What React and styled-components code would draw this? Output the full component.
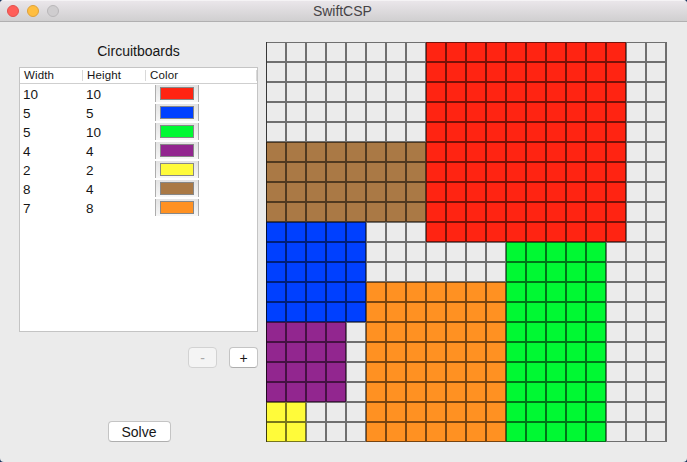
import React from "react";
import styled, { createGlobalStyle } from "styled-components";

const GlobalStyle = createGlobalStyle`
  * { box-sizing: border-box; }
  html, body { margin: 0; background: #16345f; }
  body { font-family: "Liberation Sans", Arial, sans-serif; overflow: hidden; }
`;

const Window = styled.main`
  width: 687px;
  height: 462px;
  display: flex;
  flex-direction: column;
  border-radius: 4px;
  overflow: hidden;
  background: #ebebeb;
  color: #161616;
`;

const TitleBar = styled.header`
  height: 22px;
  flex: none;
  display: grid;
  grid-template-columns: 306px auto 1fr;
  align-items: center;
  padding: 0 7px;
  background: linear-gradient(#eae6ea, #d0cfd0);
  border-top: 1px solid #f5f3f5;
  border-bottom: 1px solid #b1b0b1;
`;

const Lights = styled.div`
  display: flex;
  gap: 8px;
`;

const Light = styled.span`
  width: 12px;
  height: 12px;
  border-radius: 50%;
  background: ${(p) => p.$fill};
  border: 1px solid ${(p) => p.$edge};
`;

const Title = styled.h1`
  margin: 0;
  font-size: 14px;
  line-height: 20px;
  font-weight: 400;
  letter-spacing: -0.05px;
  white-space: nowrap;
  color: #464346;
`;

const Content = styled.div`
  flex: 1;
  display: flex;
  gap: 8px;
  padding: 20px 20px 0 19px;
`;

const Sidebar = styled.section`
  width: 239px;
  display: flex;
  flex-direction: column;
`;

const Heading = styled.h2`
  margin: 0;
  height: 25px;
  font-size: 14px;
  line-height: 18px;
  font-weight: 400;
  text-align: center;
`;

const Table = styled.div`
  height: 265px;
  background: #fff;
  border: 1px solid #c4c4c4;
`;

const HeaderRow = styled.div`
  height: 16px;
  display: flex;
  align-items: center;
  border-bottom: 1px solid #cfcfcf;
`;

const HeaderCell = styled.div`
  width: ${(p) => p.$width}px;
  height: 11px;
  padding-left: 4px;
  border-right: 1px solid #d9d9d9;
  font-size: 11.5px;
  line-height: 10px;
  letter-spacing: 0.15px;
`;

const Rows = styled.div`
  padding-top: 1px;
`;

const Row = styled.div`
  height: 19px;
  display: grid;
  grid-template-columns: 63px 72px 44px;
`;

const Value = styled.span`
  padding-left: 3px;
  font-size: 13.5px;
  line-height: 19px;
`;

const ColorWell = styled.div`
  height: 17px;
  padding: 2px 4px;
  background: linear-gradient(#e3e3e3, #f7f7f7);
  border: solid #adadad;
  border-width: 0 1px;
`;

const Swatch = styled.div`
  height: 13px;
  background: ${(p) => p.$color};
  border: 1px solid #878787;
`;

const Actions = styled.div`
  display: flex;
  justify-content: flex-end;
  gap: 12px;
  margin-top: 15px;
`;

const Button = styled.button`
  width: ${(p) => p.$width}px;
  height: 21px;
  padding: 1px 0 0;
  font: 14px/17px "Liberation Sans", Arial, sans-serif;
  color: #161616;
  background: #fff;
  border: 1px solid #c4c4c4;
  border-bottom-color: #aeaeae;
  border-radius: 4px;
  &:disabled {
    color: #a9a9a9;
    background: #f4f4f4;
    border-color: #d2d2d2;
  }
`;

const SolveArea = styled.div`
  display: flex;
  justify-content: center;
  margin-top: 53px;
  padding-left: 1px;
`;

const Board = styled.div`
  width: 401px;
  height: 400px;
  display: grid;
  grid-template-columns: repeat(20, 20px);
  grid-template-rows: repeat(20, 20px);
  border-right: 1px solid #6d6d6d;
`;

const Cell = styled.div`
  background: ${(p) => p.$color};
  box-shadow: inset 0 0 0 1px rgba(0, 0, 0, 0.53)
    ${(p) => (p.$first ? ", inset 1px 0 0 rgba(0, 0, 0, 0.5)" : "")};
`;

const boards = [
  { w: 10, h: 10, color: "#ff2412", x: 8, y: 0 },
  { w: 5, h: 5, color: "#0040ff", x: 0, y: 9 },
  { w: 5, h: 10, color: "#00f933", x: 12, y: 10 },
  { w: 4, h: 4, color: "#92268f", x: 0, y: 14 },
  { w: 2, h: 2, color: "#fffb3a", x: 0, y: 18 },
  { w: 8, h: 4, color: "#aa7945", x: 0, y: 5 },
  { w: 7, h: 8, color: "#ff9122", x: 5, y: 12 },
];

const colorAt = (col, row) => {
  const hit = boards.find(
    (b) => col >= b.x && col < b.x + b.w && row >= b.y && row < b.y + b.h
  );
  return hit ? hit.color : "#ebebeb";
};

export default function App() {
  return (
    <>
      <GlobalStyle />
      <Window>
        <TitleBar>
          <Lights>
            <Light $fill="#ff5e59" $edge="#e2504d" />
            <Light $fill="#ffbe40" $edge="#dfa13a" />
            <Light $fill="#cfcdcf" $edge="#b9b7b9" />
          </Lights>
          <Title>SwiftCSP</Title>
        </TitleBar>
        <Content>
          <Sidebar>
            <Heading>Circuitboards</Heading>
            <Table>
              <HeaderRow>
                <HeaderCell $width={63}>Width</HeaderCell>
                <HeaderCell $width={63}>Height</HeaderCell>
                <HeaderCell $width={111}>Color</HeaderCell>
              </HeaderRow>
              <Rows>
                {boards.map((b) => (
                  <Row key={b.color}>
                    <Value>{b.w}</Value>
                    <Value>{b.h}</Value>
                    <ColorWell>
                      <Swatch $color={b.color} />
                    </ColorWell>
                  </Row>
                ))}
              </Rows>
            </Table>
            <Actions>
              <Button $width={29} disabled>-</Button>
              <Button $width={29}>+</Button>
            </Actions>
            <SolveArea>
              <Button $width={63}>Solve</Button>
            </SolveArea>
          </Sidebar>
          <Board>
            {Array.from({ length: 400 }, (_, i) => (
              <Cell
                key={i}
                $color={colorAt(i % 20, Math.floor(i / 20))}
                $first={i % 20 === 0}
              />
            ))}
          </Board>
        </Content>
      </Window>
    </>
  );
}
